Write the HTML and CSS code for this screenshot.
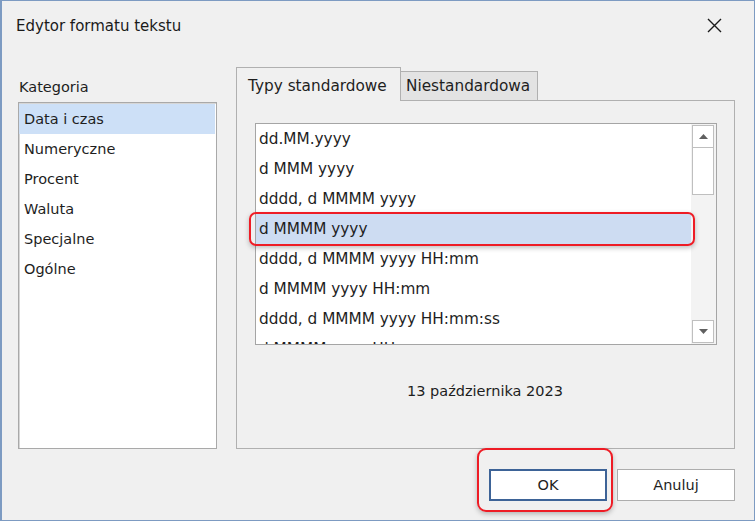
FILE: index.html
```html
<!DOCTYPE html>
<html lang="pl">
<head>
  <meta charset="UTF-8" />
  <title>Edytor formatu tekstu</title>
  <link rel="stylesheet" href="styles.css">
</head>
<body>
  <div class="dialog">
    <div class="titlebar">
      <span class="title">Edytor formatu tekstu</span>
      <button class="close" aria-label="Zamknij">
        <svg width="15" height="15" viewBox="0 0 15 15"><path d="M1 1 L14 14 M14 1 L1 14" stroke="#1a1a1a" stroke-width="1.4" fill="none"/></svg>
      </button>
    </div>

    <div class="content">
      <div class="left">
        <div class="label">Kategoria</div>
        <ul class="cats">
          <li class="selected">Data i czas</li>
          <li>Numeryczne</li>
          <li>Procent</li>
          <li>Waluta</li>
          <li>Specjalne</li>
          <li>Ogólne</li>
        </ul>
      </div>

      <div class="right">
        <div class="tabs">
          <div class="tab active">Typy standardowe</div>
          <div class="tab">Niestandardowa</div>
        </div>
        <div class="panel">
          <div class="listbox">
            <ul class="items">
              <li>dd.MM.yyyy</li>
              <li>d MMM yyyy</li>
              <li>dddd, d MMMM yyyy</li>
              <li class="selected">d MMMM yyyy</li>
              <li>dddd, d MMMM yyyy HH:mm</li>
              <li>d MMMM yyyy HH:mm</li>
              <li>dddd, d MMMM yyyy HH:mm:ss</li>
              <li>d MMMM yyyy HH:mm:ss</li>
            </ul>
            <div class="scroll">
              <div class="sbtn">
                <svg width="9" height="5" viewBox="0 0 9 5"><path d="M0 5 L4.5 0 L9 5 Z" fill="#606060"/></svg>
              </div>
              <div class="thumb"></div>
              <div class="track"></div>
              <div class="sbtn">
                <svg width="9" height="5" viewBox="0 0 9 5"><path d="M0 0 L9 0 L4.5 5 Z" fill="#606060"/></svg>
              </div>
            </div>
            <div class="mark mark-row"></div>
          </div>
          <div class="preview">13 października 2023</div>
        </div>
      </div>
    </div>

    <div class="footer">
      <div class="ok-wrap">
        <button class="btn default">OK</button>
        <div class="mark mark-ok"></div>
      </div>
      <button class="btn">Anuluj</button>
    </div>
  </div>
</body>
</html>
```

FILE: styles.css
```css
* {
  margin: 0;
  padding: 0;
  box-sizing: border-box;
}

body {
  width: 755px;
  height: 521px;
  overflow: hidden;
  background: #3c4a5c;
  font-family: "DejaVu Sans", "Noto Sans", sans-serif;
  font-size: 14.5px;
  color: #1e1e1e;
}

.dialog {
  width: 755px;
  height: 521px;
  background: #f0f0f0;
  border: 1px solid #7d9bc2;
  border-left-width: 2px;
  display: flex;
  flex-direction: column;
}

.titlebar {
  height: 49px;
  display: flex;
  align-items: center;
  justify-content: space-between;
  padding-left: 14px;
}

.title {
  font-size: 15px;
  color: #1a1a1a;
}

.close {
  width: 46px;
  height: 36px;
  border: none;
  background: transparent;
  margin-right: 17px;
  display: flex;
  align-items: center;
  justify-content: center;
}

.content {
  display: flex;
  gap: 19px;
  padding-left: 16px;
  margin-top: 17px;
  height: 382px;
}

.left {
  width: 199px;
  display: flex;
  flex-direction: column;
  padding-top: 10px;
}

.label {
  line-height: 20px;
  margin-bottom: 5px;
  padding-left: 1px;
}

.cats {
  flex: 1;
  list-style: none;
  background: #fff;
  border: 1px solid #a9a9a9;
  box-shadow: inset 1px 1px 0 #d6d6d6;
  padding-top: 1px;
}

.cats li {
  height: 30px;
  line-height: 30px;
  padding-left: 5px;
  margin-right: 1px;
}

.cats li.selected {
  background: #cde0f7;
}

.right {
  width: 499px;
  display: flex;
  flex-direction: column;
}

.tabs {
  display: flex;
  align-items: flex-end;
  height: 34px;
  margin-bottom: -1px;
  position: relative;
  z-index: 1;
  font-size: 15.3px;
}

.tab {
  height: 30px;
  line-height: 28px;
  padding: 0 5px;
  border: 1px solid #b0b0b0;
  border-bottom: none;
  background: #e3e3e3;
  white-space: nowrap;
}

.tab.active {
  height: 34px;
  line-height: 36px;
  width: 165px;
  padding-left: 11px;
  background: #f0f0f0;
}

.tab + .tab {
  border-left: none;
  width: 137px;
  border-bottom: 1px solid #b0b0b0;
}

.panel {
  flex: 1;
  border: 1px solid #b0b0b0;
  padding: 22px 17px 0 18px;
}

.listbox {
  position: relative;
  height: 222px;
  background: #fff;
  border: 1px solid #a5a5a5;
  display: flex;
}

.items {
  flex: 1;
  list-style: none;
  overflow: hidden;
  font-size: 15.3px;
}

.items li {
  height: 30px;
  line-height: 30px;
  padding-left: 3px;
  white-space: nowrap;
}

.items li.selected {
  background: #cddcf2;
}

.scroll {
  width: 25px;
  background: #f3f3f3;
  display: flex;
  flex-direction: column;
  padding: 1px 2px 1px 1px;
}

.sbtn {
  height: 23px;
  background: #fff;
  border: 1px solid #bfbfbf;
  display: flex;
  align-items: center;
  justify-content: center;
}

.thumb {
  height: 47px;
  background: #fff;
  border: 1px solid #bfbfbf;
  border-top: none;
}

.track {
  flex: 1;
}

.mark {
  position: absolute;
  border: 2px solid #ee1c25;
  border-radius: 7px;
  box-shadow: 0 2px 5px rgba(0, 0, 0, 0.25);
}

.mark-row {
  left: -7px;
  top: 88px;
  width: 446px;
  height: 34px;
}

.preview {
  text-align: center;
  margin-top: 36px;
  line-height: 20px;
  padding-right: 2px;
}

.footer {
  display: flex;
  justify-content: flex-end;
  gap: 10px;
  padding-right: 19px;
  margin-top: 20px;
}

.ok-wrap {
  position: relative;
}

.btn {
  width: 118px;
  height: 32px;
  background: #fff;
  border: 1px solid #adadad;
  font-family: inherit;
  font-size: 14.5px;
  color: #1e1e1e;
}

.btn.default {
  border: 2px solid #3d6397;
}

.mark-ok {
  left: -12px;
  top: -21px;
  width: 136px;
  height: 64px;
  border-radius: 9px;
}
```
